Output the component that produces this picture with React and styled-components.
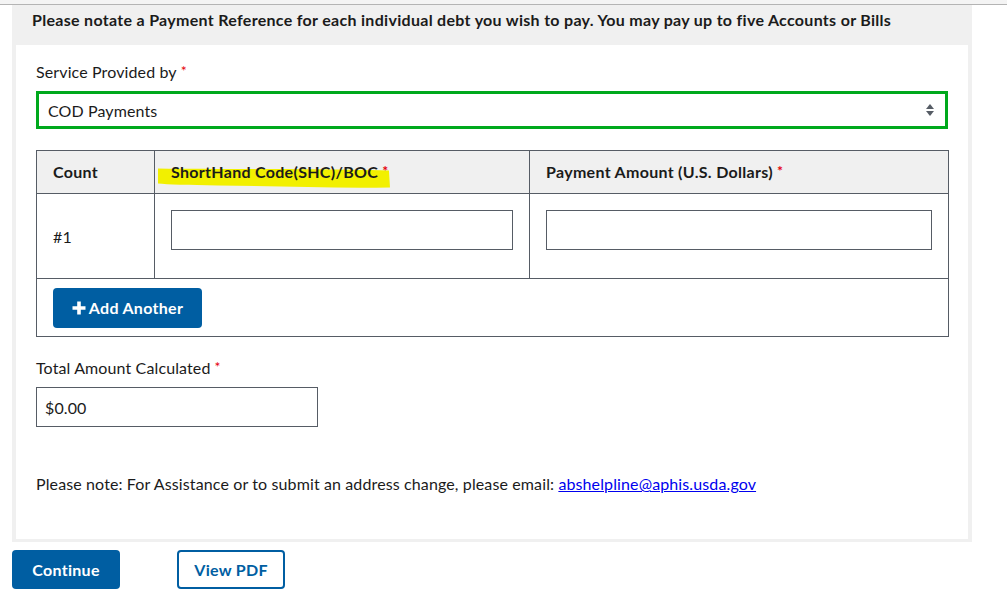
import React from "react";
import styled, { createGlobalStyle } from "styled-components";

const Global = createGlobalStyle`
  html, body { margin: 0; padding: 0; background: #fff; }
  body { font-family: "Lato", "Open Sans", sans-serif; color: #1b1b1b; font-size: 16px; letter-spacing: 0.12px; }
  * { box-sizing: border-box; }
`;

const TopStrip = styled.div`
  height: 5px;
  background: #f4f4f4;
  border-bottom: 1px solid #b4b4b4;
`;

const Card = styled.section`
  margin-left: 12px;
  width: 960px;
  background: #f0f0f0;
  padding: 0 4px 3px 4px;
`;

const CardHeader = styled.h2`
  margin: 0;
  height: 40px;
  padding: 4px 0 0 16px;
  font-size: 16px;
  line-height: 22px;
  font-weight: 700;
  color: #1b1b1b;
  letter-spacing: 0.3px;
`;

const CardBody = styled.div`
  background: #fff;
  padding: 16px 20px 0 20px;
  height: 494px;
`;

const Label = styled.label`
  display: block;
  font-size: 16px;
  line-height: 22px;
  height: 22px;
  color: #1b1b1b;
  margin-top: ${(p) => p.$top || 0}px;
`;

const Req = styled.span`
  color: #e5000b;
  margin-left: 4px;
  font-size: 14px;
  line-height: 0;
  vertical-align: 2px;
`;

const SelectBox = styled.div`
  margin-top: 8px;
  height: 38px;
  border: 3px solid #00a91c;
  display: flex;
  align-items: center;
  justify-content: space-between;
  padding: 0 10px 0 9px;
  font-size: 16px;
  color: #1b1b1b;
`;

const Table = styled.table`
  margin-top: 21px;
  width: 912px;
  border-collapse: collapse;
  table-layout: fixed;
  font-size: 16px;
`;

const Th = styled.th`
  background: #f0f0f0;
  border: 1px solid #565c65;
  height: 43px;
  text-align: left;
  padding: 0 16px 2px 16px;
  font-weight: 700;
  letter-spacing: 0.3px;
  color: #1b1b1b;
  position: relative;
`;

const Td = styled.td`
  border: 1px solid #565c65;
  padding: ${(p) => (p.$middle ? "16px" : "16px 16px 27px 16px")};
  vertical-align: ${(p) => (p.$middle ? "middle" : "top")};
  color: #1b1b1b;
  height: 85px;
`;

const ActionTd = styled.td`
  border: 1px solid #565c65;
  padding: 8px 16px 8px 16px;
  height: 58px;
`;

const HeadText = styled.span`
  position: relative;
  z-index: 1;
`;

const Highlight = styled.svg`
  position: absolute;
  left: 2px;
  top: 16px;
  width: 234px;
  height: 22px;
  z-index: 0;
`;

const TextInput = styled.input`
  display: block;
  width: 100%;
  height: 40px;
  border: 1px solid #565c65;
  padding: 0 8px;
  font-family: inherit;
  font-size: 16px;
  letter-spacing: 0.12px;
  color: #1b1b1b;
  background: #fff;
  outline: none;
`;

const TotalInput = styled(TextInput)`
  margin-top: 8px;
  width: 282px;
`;

const Button = styled.button`
  height: ${(p) => p.$h || 40}px;
  width: ${(p) => p.$w}px;
  border-radius: 4px;
  font-family: inherit;
  font-weight: 700;
  font-size: 16px;
  letter-spacing: 0.3px;
  display: inline-flex;
  align-items: center;
  justify-content: center;
  gap: 3px;
  cursor: pointer;
  background: ${(p) => (p.$outline ? "#fff" : "#005ea2")};
  color: ${(p) => (p.$outline ? "#005ea2" : "#fff")};
  border: ${(p) => (p.$outline ? "2px solid #005ea2" : "none")};
  padding: 0;
`;

const Note = styled.p`
  margin: 46px 0 0 0;
  font-size: 16px;
  line-height: 22px;
  color: #1b1b1b;
`;

const Link = styled.a`
  color: #0000ee;
  text-decoration: underline;
`;

const Actions = styled.div`
  margin: 8px 0 0 12px;
  display: flex;
  gap: 57px;
`;

const Arrows = () => (
  <svg width="10" height="14" viewBox="0 0 10 14">
    <path d="M5 1 L9 6 H1 Z" fill="#565c65" />
    <path d="M5 13 L9 8 H1 Z" fill="#565c65" />
  </svg>
);

const Plus = () => (
  <svg width="14" height="14" viewBox="0 0 14 14">
    <path d="M5.2 0.5 H8.8 V5.2 H13.5 V8.8 H8.8 V13.5 H5.2 V8.8 H0.5 V5.2 H5.2 Z" fill="#fff" />
  </svg>
);

export default function App() {
  return (
    <>
      <Global />
      <TopStrip />
      <Card>
        <CardHeader>
          Please notate a Payment Reference for each individual debt you wish to pay. You may pay up to five Accounts or Bills
        </CardHeader>
        <CardBody>
          <Label>
            Service Provided by<Req>*</Req>
          </Label>
          <SelectBox>
            <span>COD Payments</span>
            <Arrows />
          </SelectBox>
          <Table>
            <colgroup>
              <col style={{ width: 118 }} />
              <col style={{ width: 375 }} />
              <col style={{ width: 419 }} />
            </colgroup>
            <thead>
              <tr>
                <Th>Count</Th>
                <Th>
                  <Highlight viewBox="0 0 230 22" preserveAspectRatio="none">
                    <path
                      d="M1 1.5 C60 2.5 140 1 228 3.5 L229 20.5 C170 21.5 120 19 60 18.5 C30 18 10 17.5 1 16.5 Z"
                      fill="#f2f000"
                    />
                  </Highlight>
                  <HeadText>
                    ShortHand Code(SHC)/BOC<Req>*</Req>
                  </HeadText>
                </Th>
                <Th>
                  Payment Amount (U.S. Dollars)<Req>*</Req>
                </Th>
              </tr>
            </thead>
            <tbody>
              <tr>
                <Td $middle>#1</Td>
                <Td>
                  <TextInput />
                </Td>
                <Td>
                  <TextInput />
                </Td>
              </tr>
              <tr>
                <ActionTd colSpan={3}>
                  <Button $w={149}>
                    <Plus />
                    Add Another
                  </Button>
                </ActionTd>
              </tr>
            </tbody>
          </Table>
          <Label $top={20}>
            Total Amount Calculated<Req>*</Req>
          </Label>
          <TotalInput defaultValue="$0.00" />
          <Note>
            Please note: For Assistance or to submit an address change, please email:{" "}
            <Link href="#">abshelpline@aphis.usda.gov</Link>
          </Note>
        </CardBody>
      </Card>
      <Actions>
        <Button $w={108} $h={39}>Continue</Button>
        <Button $w={108} $h={39} $outline>View PDF</Button>
      </Actions>
    </>
  );
}
